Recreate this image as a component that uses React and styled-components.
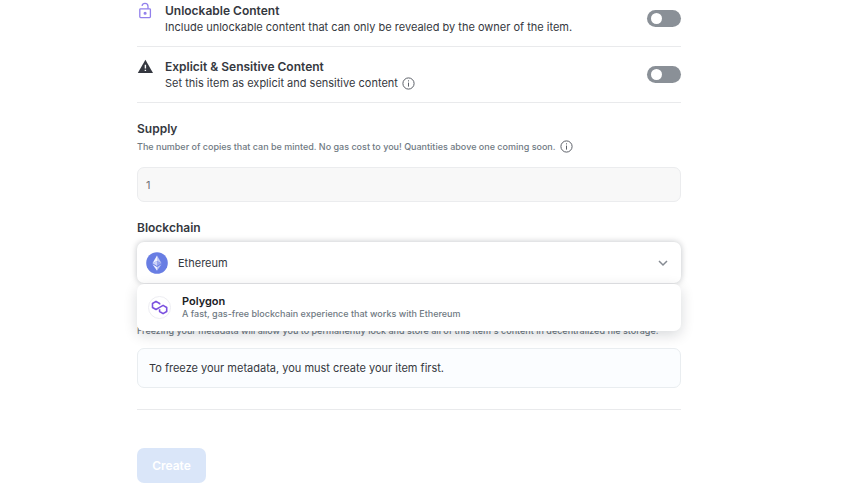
import React, { useState } from "react";
import styled, { createGlobalStyle } from "styled-components";

const GlobalStyle = createGlobalStyle`
  *, *::before, *::after { box-sizing: border-box; }
  body {
    margin: 0;
    background: #fff;
    color: #353840;
    font-family: Inter, "Open Sans", sans-serif;
    font-size: 11px;
    line-height: 16px;
  }
  p { margin: 0; }
  button, input, select { font: inherit; color: inherit; margin: 0; }
`;

const Page = styled.main`
  padding: 0 27px 8px 0;
`;

const Form = styled.form`
  max-width: 544px;
  margin: 0 auto;
`;

const ToggleRow = styled.section`
  display: flex;
  align-items: flex-start;
  padding: ${({ $first }) => ($first ? "2px" : "11px")} 0 11px;
  border-bottom: 1px solid #e9eaec;
`;

const RowIcon = styled.span`
  flex: none;
  width: 28px;
  height: 17px;
  display: flex;
  align-items: center;
  svg { display: block; }
`;

const RowText = styled.div`
  flex: 1;
`;

const Title = styled.label`
  display: block;
  font-size: 12px;
  line-height: 17px;
  font-weight: 600;
`;

const Description = styled.p`
  display: flex;
  align-items: center;
  gap: 4px;
`;

const Hint = styled.p`
  display: flex;
  align-items: center;
  gap: 4px;
  margin-top: 1px;
  color: #707a83;
  font-size: 9px;
  line-height: 17px;
  font-weight: 500;
`;

const Switch = styled.input`
  && {
    appearance: none;
    flex: none;
    display: flex;
    align-items: center;
    width: 34px;
    height: 17px;
    margin-top: 8px;
    padding: 0 4px;
    border-radius: 9px;
    background: ${({ checked }) => (checked ? "#2081e2" : "#8a9097")};
    justify-content: ${({ checked }) => (checked ? "flex-end" : "flex-start")};
    cursor: pointer;
  }
  &::before {
    content: "";
    width: 11px;
    height: 11px;
    border-radius: 50%;
    background: #fff;
  }
`;

const Field = styled.section`
  margin-top: ${({ $gap }) => $gap}px;
`;

const SupplyInput = styled.input`
  && {
    display: block;
    width: 100%;
    height: 35px;
    margin-top: 12px;
    padding: 0 8px;
    border: 1px solid #ebecee;
    border-radius: 7px;
    background: #f8f8f8;
    color: #707277;
  }
`;

const ChainPicker = styled.div`
  position: relative;
  margin-top: 6px;
`;

const SelectShell = styled.div`
  display: grid;
  grid-template-columns: 42px 1fr 28px;
  align-items: center;
  height: 41px;
  border-radius: 7px;
  background: #fff;
  box-shadow: 0 0 6px rgba(4, 17, 29, 0.25);
  > svg {
    grid-row: 1;
    pointer-events: none;
    z-index: 1;
  }
  > svg:first-child { grid-column: 1; margin-left: 9px; }
  > svg:last-child { grid-column: 3; margin-left: 4px; }
`;

const ChainSelect = styled.select`
  && {
    grid-row: 1;
    grid-column: 1 / -1;
    appearance: none;
    width: 100%;
    height: 100%;
    padding: 0 28px 0 41px;
    border: 0;
    border-radius: 7px;
    background: transparent;
    outline: none;
    cursor: pointer;
  }
`;

const Menu = styled.div`
  position: absolute;
  top: 100%;
  left: 0;
  right: 0;
  z-index: 2;
  margin-top: 1px;
  border-radius: 7px;
  background: #fff;
  box-shadow: 0 4px 14px rgba(4, 17, 29, 0.16);
`;

const MenuOption = styled.button`
  display: flex;
  align-items: center;
  gap: 11px;
  width: 100%;
  height: 47px;
  padding: 0 11px;
  border: 0;
  border-radius: 7px;
  background: transparent;
  text-align: left;
  cursor: pointer;
`;

const OptionText = styled.span`
  display: grid;
  font-size: 9px;
  font-weight: 500;
  line-height: 12px;
  color: #707a83;
`;

const OptionName = styled.strong`
  font-size: 11px;
  line-height: 13px;
  font-weight: 600;
  color: #202126;
`;

const Notice = styled.div`
  margin-top: 9px;
  padding: 11px;
  border: 1px solid #e9edf0;
  border-radius: 7px;
  background: #fbfdff;
`;

const Actions = styled.footer`
  margin-top: 21px;
  padding-top: 38px;
  border-top: 1px solid #e9eaec;
`;

const CreateButton = styled.button`
  && {
    height: 35px;
    min-width: 69px;
    padding: 0 14px;
    border: 0;
    border-radius: 7px;
    background: #dae6f9;
    color: #fff;
    font-size: 12px;
    font-weight: 600;
  }
`;

const UnlockIcon = () => (
  <svg width="16" height="17" viewBox="0 0 16 17" fill="none" stroke="#9280ec" strokeWidth="1.3" aria-hidden="true">
    <rect x="2.8" y="6.8" width="10.6" height="8.8" rx="0.8" />
    <path d="M5 3.8C5.3 2.2 6.5 1.4 8 1.4c1.8 0 3 1.2 3 3v2.4" />
    <circle cx="8.1" cy="11.2" r="0.9" fill="#9280ec" />
  </svg>
);

const WarningIcon = () => (
  <svg width="17" height="15" viewBox="0 0 17 15" aria-hidden="true">
    <path d="M8.4 0.8 16 14H0.8Z" fill="#353840" />
    <path d="M7.7 5.8h1.4v3.6H7.7zM7.7 10.7h1.4v1.4H7.7z" fill="#fff" />
  </svg>
);

const InfoIcon = () => (
  <svg width="13" height="13" viewBox="0 0 13 13" fill="none" stroke="#5c6068" strokeWidth="1" aria-hidden="true">
    <circle cx="6.5" cy="6.5" r="5.6" />
    <path d="M6.5 5.6v4M6.5 3.3v1.1" />
  </svg>
);

const EthereumIcon = () => (
  <svg width="22" height="22" viewBox="0 0 22 22" aria-hidden="true">
    <circle cx="11" cy="11" r="10.8" fill="#687de3" />
    <path d="M11 3.5v5.6l4.5 2.1z" fill="#c5cdf6" />
    <path d="M11 3.5 6.5 11.2 11 9.1z" fill="#f3f4ff" />
    <path d="M11 9.1v4.8l4.5-2.7z" fill="#99a5ed" />
    <path d="M6.5 11.2 11 13.9V9.1z" fill="#cdd3f8" />
    <path d="M11 14.9v3.8l4.5-6.5z" fill="#bdc6f4" />
    <path d="M11 18.7v-3.8l-4.5-2.7z" fill="#eff1ff" />
  </svg>
);

const PolygonIcon = () => (
  <svg width="23" height="23" viewBox="0 0 23 23" fill="none" aria-hidden="true">
    <circle cx="11.5" cy="11.5" r="11" stroke="#ededf2" />
    <path
      d="M11.6 8.6V7.5L8 5.4 4.5 7.5v4L8 13.5l3.6-2.1 3.5-2 3.6 2.1v4l-3.6 2.1-3.5-2.1v-2.2"
      stroke="#7b50df"
      strokeWidth="1.6"
      strokeLinejoin="round"
    />
  </svg>
);

const Chevron = () => (
  <svg width="12" height="12" viewBox="0 0 12 12" fill="none" stroke="#858a92" strokeWidth="1.5" aria-hidden="true">
    <path d="m2 4 4 4 4-4" />
  </svg>
);

const chains = {
  Ethereum: { Icon: EthereumIcon, note: "The most widely used blockchain for digital items" },
  Polygon: { Icon: PolygonIcon, note: "A fast, gas-free blockchain experience that works with Ethereum" },
};

function ToggleSetting({ id, icon, title, first, children }) {
  const [on, setOn] = useState(false);
  return (
    <ToggleRow $first={first}>
      <RowIcon>{icon}</RowIcon>
      <RowText>
        <Title htmlFor={id}>{title}</Title>
        <Description>{children}</Description>
      </RowText>
      <Switch id={id} type="checkbox" role="switch" checked={on} onChange={(e) => setOn(e.target.checked)} />
    </ToggleRow>
  );
}

export default function App() {
  const [chain, setChain] = useState("Ethereum");
  const SelectedIcon = chains[chain].Icon;
  const others = Object.keys(chains).filter((name) => name !== chain);

  return (
    <>
      <GlobalStyle />
      <Page>
        <Form onSubmit={(e) => e.preventDefault()}>
          <ToggleSetting id="unlockable" first icon={<UnlockIcon />} title="Unlockable Content">
            Include unlockable content that can only be revealed by the owner of the item.
          </ToggleSetting>
          <ToggleSetting id="explicit" icon={<WarningIcon />} title="Explicit & Sensitive Content">
            Set this item as explicit and sensitive content
            <InfoIcon />
          </ToggleSetting>

          <Field $gap={17}>
            <Title htmlFor="supply">Supply</Title>
            <Hint>
              The number of copies that can be minted. No gas cost to you! Quantities above one coming soon.
              <InfoIcon />
            </Hint>
            <SupplyInput id="supply" defaultValue="1" readOnly />
          </Field>

          <Field $gap={17}>
            <Title htmlFor="chain">Blockchain</Title>
            <ChainPicker>
              <SelectShell>
                <SelectedIcon />
                <ChainSelect id="chain" value={chain} onChange={(e) => setChain(e.target.value)}>
                  {Object.keys(chains).map((name) => (
                    <option key={name}>{name}</option>
                  ))}
                </ChainSelect>
                <Chevron />
              </SelectShell>
              <Menu>
                {others.map((name) => {
                  const { Icon, note } = chains[name];
                  return (
                    <MenuOption key={name} type="button" onClick={() => setChain(name)}>
                      <Icon />
                      <OptionText>
                        <OptionName>{name}</OptionName>
                        {note}
                      </OptionText>
                    </MenuOption>
                  );
                })}
              </Menu>
            </ChainPicker>
          </Field>

          <Field $gap={39}>
            <Hint>
              Freezing your metadata will allow you to permanently lock and store all of this item's content in
              decentralized file storage.
            </Hint>
            <Notice>To freeze your metadata, you must create your item first.</Notice>
          </Field>

          <Actions>
            <CreateButton type="submit" disabled>
              Create
            </CreateButton>
          </Actions>
        </Form>
      </Page>
    </>
  );
}
